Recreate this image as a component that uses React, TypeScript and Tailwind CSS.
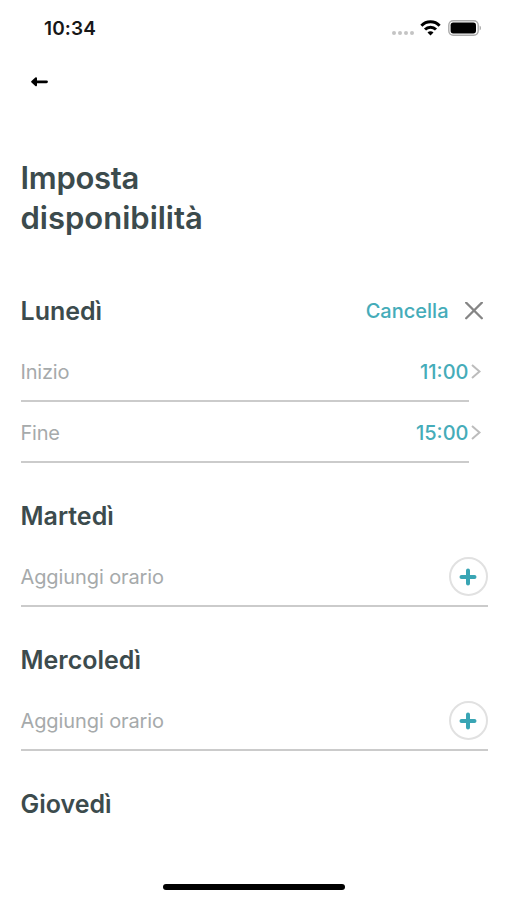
import type { ReactNode } from 'react';

function StatusBar() {
  return (
    <header className="flex h-14 items-center justify-between pr-[25px] pl-11">
      <span className="pt-[2px] text-[19px] leading-6 font-semibold tracking-[0.15px] text-[#171717]">10:34</span>
      <div className="flex items-center">
        <div className="mt-[9px] mr-[6px] flex gap-[2px]">
          {[0, 1, 2, 3].map((dot) => (
            <span key={dot} className="size-1 rounded-full bg-[#c4c4c4]" />
          ))}
        </div>
        <svg width="21" height="16" viewBox="0 0 21 16" className="mr-[7px]" fill="none" stroke="#000" strokeWidth="3">
          <path d="M1.4 5.7A12.6 12.6 0 0 1 19.6 5.7" />
          <path d="M5 9.5A7.8 7.8 0 0 1 16 9.5" />
          <path d="M10.5 15.4L7.5 12.6A4.2 4.2 0 0 1 13.5 12.6Z" fill="#000" stroke="none" />
        </svg>
        <svg width="34" height="16" viewBox="0 0 34 16">
          <rect x="0.8" y="0.8" width="29.4" height="14.4" rx="4.4" fill="#fff" stroke="#aaa" strokeWidth="1.4" />
          <rect x="2.6" y="2.6" width="25.4" height="10.8" rx="2.6" fill="#000" />
          <path d="M31.6 5.5C33.5 6.4 33.5 9.6 31.6 10.5Z" fill="#aaa" />
        </svg>
      </div>
    </header>
  );
}

function DayHeader({ name, children }: { name: string; children?: ReactNode }) {
  return (
    <div className="mb-[14px] flex h-8 items-center justify-between">
      <h2 className="text-[25px] leading-8 font-semibold text-[#3c4b4d]">{name}</h2>
      {children}
    </div>
  );
}

function TimeRow({ label, time }: { label: string; time: string }) {
  return (
    <div className="flex h-[61px]">
      <div className="flex w-[448px] items-center justify-between border-b-2 border-[#cbcbcb] pt-[3px]">
        <span className="text-[20px] leading-6 tracking-[-0.2px] text-[#a6aaab]">{label}</span>
        <span className="text-[20px] leading-6 font-medium text-[#45acb9]">{time}</span>
      </div>
      <svg width="12" height="60" viewBox="0 0 12 60" fill="none" stroke="#bcbcbc" strokeWidth="2">
        <path d="M3 24L10.5 30.5L3 37" />
      </svg>
    </div>
  );
}

function AddRow() {
  return (
    <div className="flex h-[61px] items-center justify-between border-b-2 border-[#cbcbcb]">
      <span className="pt-[3px] text-[20px] leading-6 tracking-[-0.1px] text-[#a6aaab]">Aggiungi orario</span>
      <button aria-label="Aggiungi orario" className="mt-[2px] flex size-[39px] items-center justify-center rounded-full border-2 border-[#e1e1e1]">
        <svg width="18" height="18" viewBox="0 0 18 18" stroke="#39a5b4" strokeWidth="4" strokeLinecap="round">
          <path d="M9 2.5V15.5M2.5 9H15.5" />
        </svg>
      </button>
    </div>
  );
}

export default function App() {
  return (
    <div className="flex h-[900px] w-[507px] flex-col overflow-hidden bg-white font-['Inter',sans-serif]">
      <StatusBar />
      <nav className="flex h-[52px] items-center pl-[31px]">
        <svg width="18" height="12" viewBox="0 0 18 12" stroke="#000" strokeLinecap="round" strokeLinejoin="round">
          <path d="M4 5.8H15.5" strokeWidth="2.8" />
          <path d="M5 2.3L1.2 5.8L5 9.3Z" fill="#000" strokeWidth="2" />
        </svg>
      </nav>
      <main className="flex w-[487.5px] flex-1 flex-col gap-[37px] pl-[20.5px]">
        <h1 className="mt-[50px] mb-5 text-[31px] leading-10 font-semibold text-[#3c4b4d]">
          <span className="tracking-[-0.3px]">Imposta</span>
          <br />
          disponibilità
        </h1>
        <section>
          <DayHeader name="Lunedì">
            <button className="mr-[5px] flex items-center gap-4">
              <span className="text-[20px] leading-6 font-medium text-[#45acb9]">Cancella</span>
              <svg width="18" height="18" viewBox="0 0 18 18" stroke="#858585" strokeWidth="2.3" strokeLinecap="round">
                <path d="M1.2 0.7L16.8 16.3M16.8 0.7L1.2 16.3" />
              </svg>
            </button>
          </DayHeader>
          <TimeRow label="Inizio" time="11:00" />
          <TimeRow label="Fine" time="15:00" />
        </section>
        <section>
          <DayHeader name="Martedì" />
          <AddRow />
        </section>
        <section>
          <DayHeader name="Mercoledì" />
          <AddRow />
        </section>
        <section>
          <DayHeader name="Giovedì" />
        </section>
      </main>
      <div className="mb-[10px] ml-[163px] h-[6px] w-[182px] rounded-full bg-black" />
    </div>
  );
}
